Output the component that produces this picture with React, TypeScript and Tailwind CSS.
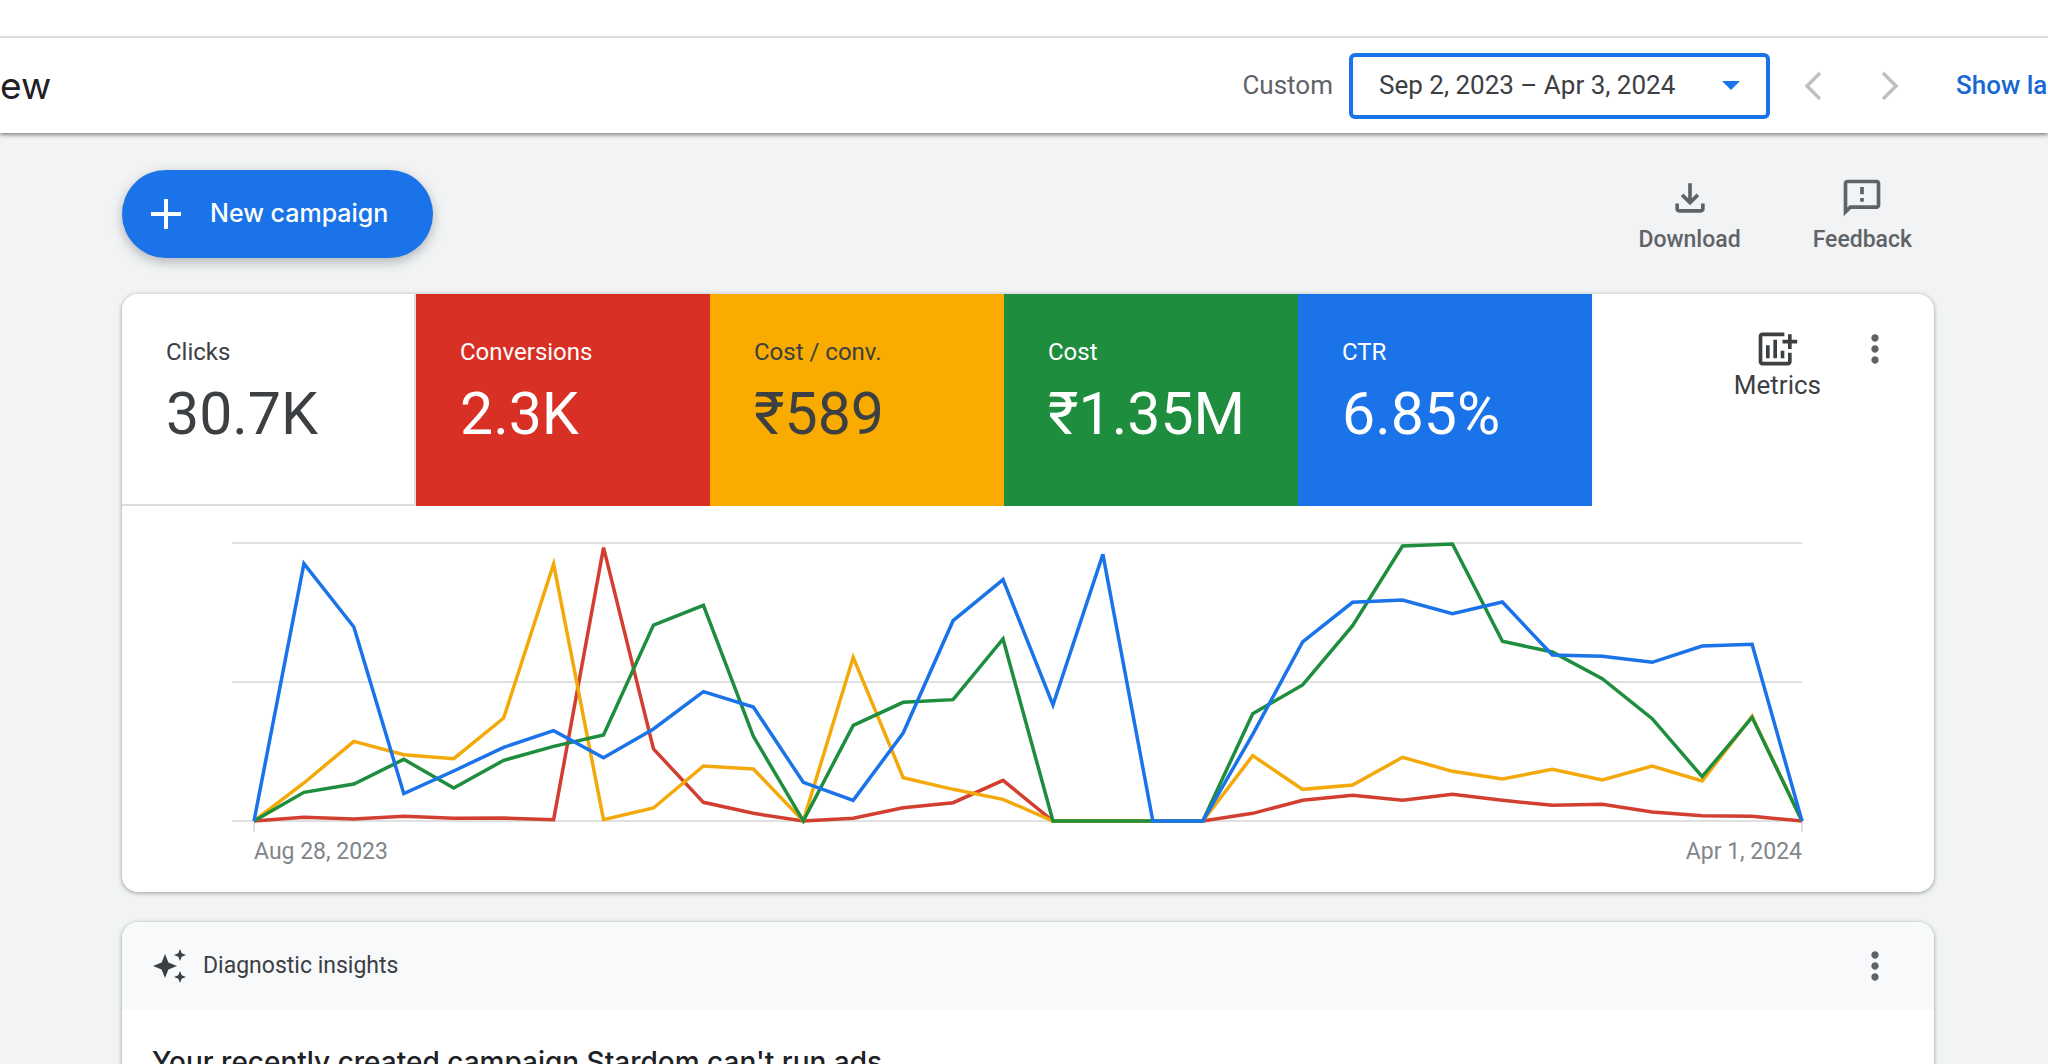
import type { ReactNode } from "react";
import { MdMoreVert, MdOutlineFeedback } from "react-icons/md";

const tiles = [
  { label: "Clicks", value: "30.7K", tone: "bg-white text-[#3c4043] border-b-2 border-r-2 border-[#dadce0]" },
  { label: "Conversions", value: "2.3K", tone: "bg-[#d93025] text-white" },
  { label: "Cost / conv.", value: "₹589", tone: "bg-[#f9ab00] text-[#3c4043]" },
  { label: "Cost", value: "₹1.35M", tone: "bg-[#1e8e3e] text-white" },
  { label: "CTR", value: "6.85%", tone: "bg-[#1a73e8] text-white" },
];

// Weekly values on a 0–832 scale, Aug 28, 2023 to Apr 1, 2024.
const series = [
  {
    name: "Conversions",
    color: "#d23f31",
    values: [0, 11, 6, 14, 8, 9, 4, 820, 216, 56, 23, 0, 8, 40, 55, 122, 0, 0, 0, 0, 23, 62, 77, 62, 80, 62, 47, 50, 27, 16, 14, 0],
  },
  {
    name: "Cost / conv.",
    color: "#f4a90b",
    values: [0, 114, 239, 199, 187, 309, 771, 4, 39, 165, 156, 0, 491, 130, 95, 65, 0, 0, 0, 0, 196, 95, 108, 191, 149, 126, 155, 123, 165, 120, 314, 0],
  },
  {
    name: "Cost",
    color: "#1e8e3e",
    values: [0, 86, 111, 185, 99, 182, 224, 258, 588, 647, 254, 0, 287, 356, 364, 546, 0, 0, 0, 0, 322, 408, 586, 825, 831, 539, 507, 427, 307, 133, 311, 0],
  },
  {
    name: "CTR",
    color: "#1a73e8",
    values: [0, 772, 582, 82, 150, 221, 271, 190, 276, 388, 342, 116, 62, 264, 601, 724, 348, 800, 0, 0, 260, 537, 656, 663, 622, 657, 498, 494, 476, 525, 530, 0],
  },
];

function toPoints(values: number[]) {
  return values.map((v, i) => `${22 + (i * 1548) / 31},${279 - v / 3}`).join(" ");
}

function Chart() {
  return (
    <figure className="pt-9 pr-[132px] pb-6 pl-[110px]">
      <svg viewBox="0 0 1570 290" preserveAspectRatio="none" className="block h-[290px] w-full overflow-visible" role="img" aria-label="Performance over time">
        <g stroke="#e0e0e0" strokeWidth="2">
          <path d="M0 1H1570M0 140H1570M0 279H1570M22 279V290M1570 279V290" vectorEffect="non-scaling-stroke" />
        </g>
        {series.map((s) => (
          <polyline
            key={s.name}
            points={toPoints(s.values)}
            fill="none"
            stroke={s.color}
            strokeWidth="3.5"
            strokeLinejoin="miter"
            vectorEffect="non-scaling-stroke"
          />
        ))}
      </svg>
      <figcaption className="mt-1 flex justify-between pl-[22px] text-[23px] leading-8 text-[#80868b]">
        <span>Aug 28, 2023</span>
        <span>Apr 1, 2024</span>
      </figcaption>
    </figure>
  );
}

function DownloadIcon() {
  return (
    <svg viewBox="0 -960 960 960" className="size-11" fill="currentColor" aria-hidden="true">
      <path d="M480-320 280-520l56-58 104 104v-326h80v326l104-104 56 58-200 200ZM240-160q-33 0-56.5-23.5T160-240v-120h80v120h480v-120h80v120q0 33-23.5 56.5T720-160H240Z" />
    </svg>
  );
}

function MetricsIcon() {
  return (
    <svg viewBox="1 0 24 24" className="size-11" fill="currentColor" aria-hidden="true">
      <path d="M5 3h12v2H5v14h14v-5h2v5c0 1.1-.9 2-2 2H5c-1.1 0-2-.9-2-2V5c0-1.1.9-2 2-2z" />
      <path d="M19 4h2v3h3v2h-3v3h-2V9h-3V7h3zM7 10h2v7H7zM11 7h2v10h-2zM15 13h2v4h-2z" />
    </svg>
  );
}

function SparkleIcon() {
  return (
    <svg viewBox="0 0 34 34" className="size-[34px]" fill="#3c4043" aria-hidden="true">
      <path d="M12 5l3.4 8.6L24 17l-8.6 3.4L12 29l-3.4-8.6L0 17l8.6-3.4zM27 0l1.7 4.3L33 6l-4.3 1.7L27 12l-1.7-4.3L21 6l4.3-1.7zM27 22l1.7 4.3L33 28l-4.3 1.7L27 34l-1.7-4.3L21 28l4.3-1.7z" />
    </svg>
  );
}

function Chevron({ label, d }: { label: string; d: string }) {
  return (
    <button type="button" aria-label={label} className="flex w-[77px] justify-center text-[#bdc1c6]">
      <svg viewBox="0 0 18 30" className="h-[30px] w-[18px]" fill="none" stroke="currentColor" strokeWidth="3.5">
        <path d={d} />
      </svg>
    </button>
  );
}

function ToolButton({ icon, label }: { icon: ReactNode; label: string }) {
  return (
    <button type="button" className="flex flex-col items-center text-[23px] leading-7 font-medium text-[#5f6368]">
      {icon}
      <span className="mt-1.5">{label}</span>
    </button>
  );
}

function MoreButton() {
  return (
    <button type="button" aria-label="More options" className="text-[#5f6368]">
      <MdMoreVert className="size-11" />
    </button>
  );
}

export default function App() {
  return (
    <div className="flex h-screen flex-col overflow-hidden bg-[#f1f3f4] font-[Roboto,sans-serif]">
      <header className="relative z-10 shrink-0 bg-white shadow-[0_2px_4px_rgba(0,0,0,0.45)]">
        <div className="box-content h-9 border-b-2 border-[#dadce0]" />
        <div className="flex h-[95px] items-center justify-between">
          <h1 className="font-[Inter,sans-serif] text-[37px] leading-[48px] text-[#202124]">ew</h1>
          <div className="flex items-center text-[26px]">
            <span id="range-label" className="mr-4 text-[#5f6368]">Custom</span>
            <button
              type="button"
              aria-haspopup="dialog"
              aria-describedby="range-label"
              className="flex h-[66px] w-[421px] items-center justify-between rounded-md border-4 border-[#1a73e8] px-[26px] text-[#3c4043]"
            >
              Sep 2, 2023 – Apr 3, 2024
              <svg viewBox="0 0 18 9" className="h-[9px] w-[18px]" fill="#1a73e8" aria-hidden="true">
                <path d="M0 0h18L9 9z" />
              </svg>
            </button>
            <div className="flex pl-1">
              <Chevron label="Previous period" d="M16 2L3 15l13 13" />
              <Chevron label="Next period" d="M2 2l13 13L2 28" />
            </div>
            <a href="#compare" className="ml-7 w-[92px] font-medium whitespace-nowrap text-[#1967d2]">Show la</a>
          </div>
        </div>
      </header>

      <main className="flex-1 pt-[37px] pr-[114px] pl-[122px]">
        <div className="mb-9 flex items-start justify-between">
          <button
            type="button"
            className="flex h-[88px] items-center gap-[29px] rounded-full bg-[#1a73e8] pr-[45px] pl-[29px] font-[Inter,sans-serif] text-[25px] font-medium text-white shadow-[0_4px_12px_rgba(60,64,67,0.35)]"
          >
            <svg viewBox="0 0 30 30" className="size-[30px]" stroke="currentColor" strokeWidth="4" aria-hidden="true">
              <path d="M15 0v30M0 15h30" />
            </svg>
            New campaign
          </button>
          <div className="flex gap-[72px] pt-1.5 pr-[22px]">
            <ToolButton icon={<DownloadIcon />} label="Download" />
            <ToolButton icon={<MdOutlineFeedback className="size-11" />} label="Feedback" />
          </div>
        </div>

        <section className="mb-[30px] overflow-hidden rounded-2xl bg-white shadow-[0_1px_4px_rgba(60,64,67,0.5)]">
          <div className="flex h-[212px]">
            {tiles.map((t) => (
              <button
                type="button"
                key={t.label}
                className={`flex w-[294px] flex-col items-start pt-10 pl-11 ${t.tone}`}
              >
                <span className="text-[24px] leading-9">{t.label}</span>
                <span className="mt-2 text-[59px] leading-[72px]">{t.value}</span>
              </button>
            ))}
            <div className="flex flex-1 items-start justify-end pt-[33px] pr-[37px]">
              <button type="button" className="mr-8 flex flex-col items-center text-[26px] leading-7 text-[#3c4043]">
                <MetricsIcon />
                Metrics
              </button>
              <MoreButton />
            </div>
          </div>
          <Chart />
        </section>

        <section className="overflow-hidden rounded-t-2xl bg-white shadow-[0_1px_4px_rgba(60,64,67,0.5)]">
          <div className="flex h-[88px] items-center gap-4 bg-[#f8f9fb] pr-[37px] pl-[31px]">
            <SparkleIcon />
            <span className="flex-1 text-[23px] text-[#3c4043]">Diagnostic insights</span>
            <MoreButton />
          </div>
          <h2 className="px-[30px] pt-8 pb-8 font-[Inter,sans-serif] text-[28px] leading-10 font-medium text-[#202124]">
            Your recently created campaign Stardom can&apos;t run ads
          </h2>
        </section>
      </main>
    </div>
  );
}
